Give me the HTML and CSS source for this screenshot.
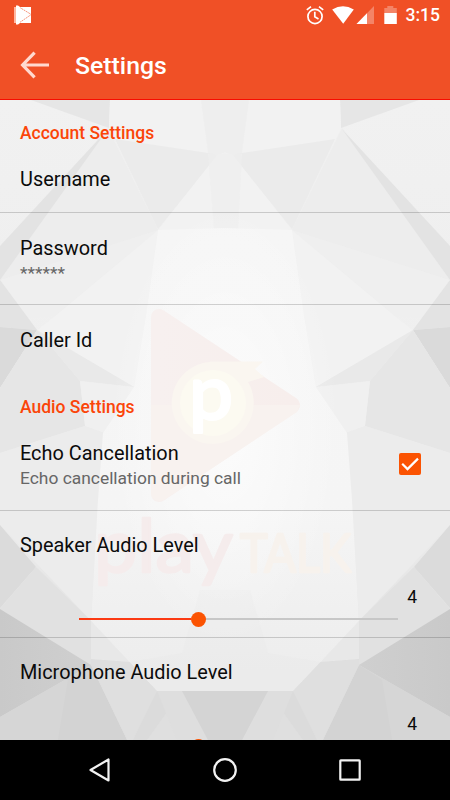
FILE: index.html
```html
<!DOCTYPE html>
<html lang="en">
<head>
<meta charset="utf-8">
<title>Settings</title>
<link rel="stylesheet" href="styles.css">
</head>
<body>
<div class="phone">
  <header class="header">
    <div class="status">
      <svg class="status-app" width="20" height="20" viewBox="0 0 20 20">
        <path fill="#ffb6a0" d="M0 2h3v16H0z"/>
        <path fill="#fff" d="M3 2h14v16H3z"/>
        <path fill="none" stroke="#f05026" stroke-width=".6" stroke-dasharray="2 .7" d="M5 2 17.300 9.500 5 18"/>
        <path fill="#fff" d="M2 .5h2l2 1.500v16l-2 1.500H2z"/>
      </svg>
      <svg class="status-icons" width="92" height="20" viewBox="0 0 92 20">
        <g fill="none" stroke="#fff" stroke-width="1.7">
          <circle cx="9" cy="11.500" r="7.100"/>
          <path d="M8.800 6.800v5l3.700 2.200M.8 4.900 5 1.600M17.200 4.900 13 1.600"/>
        </g>
        <path fill="#fff" d="M26.200 4.600Q37-2 47.800 4.600L37.200 18.700z"/>
        <path fill="#fff" fill-opacity=".3" d="M68 1v18H50.500z"/>
        <path fill="#fff" d="M61 8.200V19H50.500z"/>
        <path fill="#fff" fill-opacity=".3" d="M78.300 3h3V1h6v2h3.500v5H78.300z"/>
        <path fill="#fff" d="M78.300 8h12.500v11H78.300z"/>
      </svg>
      <span class="clock">3:15</span>
    </div>
    <div class="bar">
      <svg class="back" width="30" height="28" viewBox="0 0 30 28"><path fill="none" stroke="#ffd9cf" stroke-width="3.200" d="M29 14H3M14.600 1.600 2.600 14l12 12.400"/></svg>
      <h1 class="title">Settings</h1>
    </div>
  </header>

  <main class="content">
    <svg class="backdrop" width="450" height="640" viewBox="0 100 450 640" aria-hidden="true">
      <defs>
        <linearGradient id="base" x1="0" y1="0" x2="0" y2="1"><stop offset="0" stop-color="#f1f1f1"/><stop offset=".65" stop-color="#ececec"/><stop offset="1" stop-color="#dadada"/></linearGradient>
        <linearGradient id="body" x1="0" y1="0" x2="0" y2="1"><stop offset="0" stop-color="#f6f6f6"/><stop offset=".6" stop-color="#f5f5f5"/><stop offset="1" stop-color="#ececec"/></linearGradient>
        <linearGradient id="low" gradientUnits="userSpaceOnUse" x1="0" y1="0" x2="100" y2="0"><stop offset="0" stop-color="#c9c9c9"/><stop offset="1" stop-color="#d0d0d0"/></linearGradient>
        <radialGradient id="glow"><stop offset="0" stop-color="#fff" stop-opacity=".7"/><stop offset="1" stop-color="#fff" stop-opacity="0"/></radialGradient>
        <linearGradient id="play" x1="0" y1="0" x2="1" y2="0"><stop offset="0" stop-color="#f7f0ef"/><stop offset="1" stop-color="#f7eeec"/></linearGradient>
        <g id="facets">
          <path fill="#e6e6e6" d="M31 100h79l-1 28z"/>
          <path fill="#f2f2f2" d="M110 100h91l7 54-93-14-6-12z"/>
          <path fill="#eeeeee" d="M201 100h24.500v52l-7 3h-10z"/>
          <path fill="#ededed" d="M108 128 158 230 55 316 26 318 0 280z"/>
          <path fill="#ebebeb" d="M115 139 208 153l10 2-60 74z"/>
          <path fill="#f2f2f2" d="M158 230 55 316 37 330l97 57 12-72z"/>
          <path fill="#e3e3e3" d="M108 129 0 246v34z"/>
          <path fill="#f0f0f0" d="M0 280 158 230 55 316 37 330z" opacity=".55"/>
          <path fill="#e3e3e3" d="M0 280 37 330 0 327z"/>
          <path fill="#dadada" d="M0 327 37 330 0 388z"/>
          <path fill="#e6e6e6" d="M37 330 80 381 85 426 0 453V388z"/>
          <path fill="#e9e9e9" d="M37 330 134 387 80 381z"/>
          <path fill="#f0f0f0" d="M80 381 134 387 104 433 85 426z"/>
          <path fill="#ececec" d="M85 426 104 433 98 500 91 621 0 525V453z"/>
          <path fill="#dbdbdb" d="M0 525 36 567 0 608z"/>
          <path fill="#e1e1e1" d="M36 567 91 621V665L0 609z"/>
          <path fill="url(#low)" d="M0 609 91 665 0 717z"/>
          <path fill="#d6d6d6" d="M91 665 127 740H0V717z"/>
          <path fill="#d2d2d2" d="M91 665 68 680 58 740H127z" opacity=".7"/>
          <path fill="#dfdfdf" d="M91 621 157 691 178 740H127L91 665z"/>
          <path fill="#dbdbdb" d="M157 691h25l-35 49h-14z"/>
          <path fill="#dedede" d="M157 691h25l26 49h-31z"/>
        </g>
      </defs>
      <path fill="url(#base)" d="M0 100h450v640H0z"/>
      <use href="#facets"/>
      <use href="#facets" transform="matrix(-1 0 0 1 450 0)"/>
      <path fill="#f2f2f2" d="M218 154h14l60 76H158z"/>
      <path fill="#eeeeee" d="M208 154h34l-4 75h-24z" opacity=".75"/>
      <path fill="url(#body)" d="M158 230l67-2 67 2 12 85 12 72 31 46 5 67 7 121-66 70H157L91 621 98 500 103 433l31-46 12-72z"/>
      <path fill="#f4f4f4" d="M91 621v38l39 3z" opacity=".45"/>
      <path fill="#f4f4f4" d="M359 621v38l-39 3z" opacity=".45"/>
      <path fill="#e8e8e8" fill-opacity=".3" d="M200 590h50l18 63 52 9-27 29H157l-27-29 52-9z"/>
      <path fill="#d4d4d4" d="M182 691h86l-26 49h-34z"/>
      <ellipse cx="225" cy="425" rx="115" ry="220" fill="url(#glow)"/>
      <path fill="url(#play)" stroke="url(#play)" stroke-width="16" stroke-linejoin="round" d="M159 317 292 405 159 494z"/>
      <path fill="#f8f2ef" d="M151 405H300l-3 7-133 88q-13 3-13-8z"/>
      <path fill="#faf6f0" d="M210 361.500H263L255 369l9 8-16 5a41 41 0 1 1-38-20z"/>
      <circle cx="213" cy="403" r="33" fill="#fcfaf1"/>
      <text class="mark" x="189" y="419" textLength="44" lengthAdjust="spacingAndGlyphs">p</text>
      <text class="word word-play" x="94" y="572" textLength="139" lengthAdjust="spacingAndGlyphs">play</text>
      <text class="word word-talk" x="240" y="572" textLength="111" lengthAdjust="spacingAndGlyphs">TALK</text>
    </svg>

    <div class="list">
      <section class="group">
        <h2 class="heading">Account Settings</h2>
        <div class="row row-username"><div class="label">Username</div></div>
        <div class="row row-password"><div class="label">Password</div><div class="summary">******</div></div>
        <div class="row row-caller"><div class="label">Caller Id</div></div>
      </section>
      <section class="group">
        <h2 class="heading heading-audio">Audio Settings</h2>
        <div class="row row-echo">
          <div><div class="label">Echo Cancellation</div><div class="summary">Echo cancellation during call</div></div>
          <svg class="check" width="22" height="22" viewBox="0 0 22 22"><rect width="22" height="22" rx="2" fill="#fb5302"/><path fill="none" stroke="#fff" stroke-width="2.200" d="m3.200 10.800 5.300 5.300L19 5.600"/></svg>
        </div>
        <div class="row row-slider">
          <div class="label">Speaker Audio Level</div>
          <div class="value">4</div>
          <div class="slider"><div class="fill"></div><div class="thumb"></div></div>
        </div>
        <div class="row row-slider">
          <div class="label">Microphone Audio Level</div>
          <div class="value">4</div>
          <div class="slider"><div class="fill"></div><div class="thumb"></div></div>
        </div>
      </section>
    </div>
  </main>

  <nav class="nav">
    <svg width="24" height="26" viewBox="0 0 24 26"><path d="M20.500 2.500v21L2.500 13z"/></svg>
    <svg width="26" height="26" viewBox="0 0 26 26"><circle cx="13" cy="13" r="10.800"/></svg>
    <svg width="24" height="24" viewBox="0 0 24 24"><rect x="2.300" y="2.300" width="19.400" height="19.400" rx=".5"/></svg>
  </nav>
</div>
</body>
</html>
```
FILE: styles.css
```css
* { box-sizing: border-box; }

body {
  margin: 0;
  font-family: Roboto, "Liberation Sans", sans-serif;
  color: #0b0b0b;
}

.phone {
  display: flex;
  flex-direction: column;
  width: 450px;
  height: 800px;
  overflow: hidden;
}

.header {
  flex: none;
  height: 100px;
  background: #f05026;
  border-bottom: 1px solid #f80c00;
  color: #fff;
}

.status {
  display: flex;
  align-items: center;
  height: 30px;
  padding: 0 10px 0 14px;
}

.status-icons { margin-left: auto; }

.clock {
  margin-left: 8px;
  font-size: 17.5px;
  font-weight: 500;
  line-height: 32px;
}

.bar {
  display: flex;
  align-items: center;
  height: 70px;
  padding-left: 20px;
}

.title {
  margin: 1px 0 0 25px;
  font-size: 24.8px;
  font-weight: 500;
  line-height: 30px;
}

.content {
  position: relative;
  flex: 1;
  min-height: 0;
  overflow: hidden;
}

.backdrop {
  position: absolute;
  inset: 0;
}

.mark {
  font: 400 76px Lato, sans-serif;
  fill: #fff;
  stroke: #fff;
  stroke-width: 3px;
  stroke-linejoin: round;
}

.word {
  stroke-linejoin: round;
  stroke-linecap: round;
}

.word-play {
  font: 400 74px Lato, sans-serif;
  fill: #f5ecec;
  stroke: #f5ecec;
  stroke-width: 2.5px;
}

.word-talk {
  font: 400 52px Lato, sans-serif;
  fill: #f7f2ed;
  stroke: #f7f2ed;
  stroke-width: 2.5px;
}

.list { position: relative; }

.heading {
  margin: 0;
  padding: 23px 20px 0;
  font-size: 17.5px;
  font-weight: 500;
  line-height: 21px;
  color: #fb4509;
}

.heading-audio { padding-top: 25px; }

.row {
  padding: 0 20px;
  border-bottom: 1px solid rgba(0, 0, 0, 0.17);
}

.label {
  font-size: 19.9px;
  line-height: 24px;
}

.summary {
  font-size: 17.4px;
  line-height: 21px;
  margin-top: 2px;
  color: #666;
}

.row-username { height: 69px; padding-top: 24px; }
.row-password { height: 92px; padding-top: 24px; }
.row-caller { height: 67px; padding-top: 24px; border-bottom: 0; }

.row-echo {
  display: flex;
  justify-content: space-between;
  align-items: flex-start;
  height: 93px;
  padding: 24px 29px 0 20px;
}

.check { margin-top: 11px; }

.row-slider {
  height: 127px;
  padding-top: 23px;
}

.value {
  margin-top: 29px;
  padding-right: 13px;
  text-align: right;
  font-size: 17.5px;
  line-height: 21px;
}

.slider {
  display: flex;
  align-items: center;
  width: 319px;
  height: 2px;
  margin: 10px 0 0 59px;
  background: #c7c7c7;
}

.fill {
  width: 112px;
  height: 2px;
  background: #fb3a13;
}

.thumb {
  flex: none;
  width: 15px;
  height: 15px;
  border-radius: 50%;
  background: #fb5302;
}

.nav {
  flex: none;
  display: flex;
  align-items: center;
  justify-content: space-between;
  height: 60px;
  padding: 0 88px;
  background: #000;
}

.nav svg {
  fill: none;
  stroke: #f2f2f2;
  stroke-width: 2.2;
  stroke-linejoin: round;
}
```
